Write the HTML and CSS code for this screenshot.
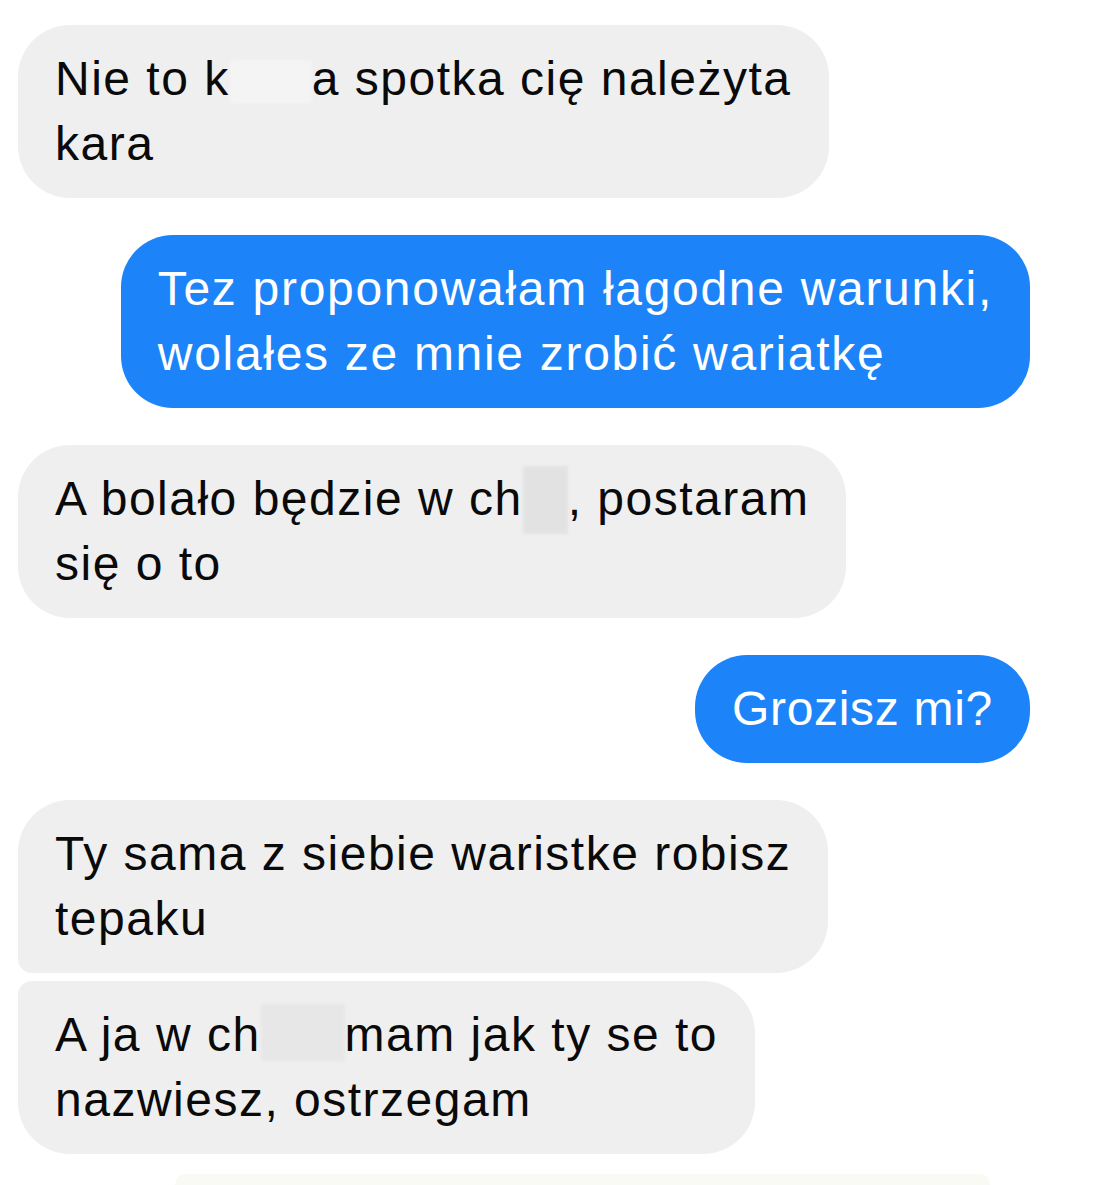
FILE: index.html
```html
<!DOCTYPE html>
<html>
<head>
    <title>Rozmowa</title>
    <link rel="stylesheet" href="styles.css">
</head>
<body>
    <div class="chat">
        <div class="msg msg-in">
            <div class="bubble">Nie to k<span class="hidden hidden-a"></span>a spotka cię należyta<br>kara</div>
        </div>

        <div class="msg msg-out">
            <div class="bubble">Tez proponowałam łagodne warunki,<br>wolałes ze mnie zrobić wariatkę</div>
        </div>

        <div class="msg msg-in">
            <div class="bubble">A bolało będzie w ch<span class="hidden hidden-b"></span>, postaram<br>się o to</div>
        </div>

        <div class="msg msg-out">
            <div class="bubble bubble-short">Grozisz mi?</div>
        </div>

        <div class="group">
            <div class="msg msg-in group-first">
                <div class="bubble">Ty sama z siebie waristke robisz<br>tepaku</div>
            </div>
            <div class="msg msg-in group-last">
                <div class="bubble">A ja w ch<span class="hidden hidden-c"></span>mam jak ty se to<br>nazwiesz, ostrzegam</div>
            </div>
        </div>

        <div class="next-preview"></div>
    </div>
</body>
</html>
```

FILE: styles.css
```css
body {
    font-family: "Liberation Sans", Arial, sans-serif;
    background-color: #fff;
    margin: 0;
    padding: 0;
}

.chat {
    display: flex;
    flex-direction: column;
    gap: 37px;
    padding: 25px 72px 0 18px;
    height: 1185px;
    box-sizing: border-box;
    overflow: hidden;
}

.msg {
    display: flex;
}

.msg-in {
    justify-content: flex-start;
}

.msg-out {
    justify-content: flex-end;
}

.bubble {
    font-size: 48px;
    line-height: 65px;
    letter-spacing: 1.5px;
    padding: 21px 37px 22px 37px;
    border-radius: 52px;
    white-space: nowrap;
}

.msg-in .bubble {
    background-color: #efefef;
    color: #0a0a0a;
}

.msg-out .bubble {
    background-color: #1c84f8;
    color: #fff;
    letter-spacing: 1.7px;
}

.msg-out .bubble-short {
    letter-spacing: 0.7px;
}

.group {
    display: flex;
    flex-direction: column;
    gap: 8px;
}

.group-first .bubble {
    border-bottom-left-radius: 14px;
}

.group-last .bubble {
    border-top-left-radius: 14px;
}

/* censored word: empty gap with a soft patch laid over it */
.hidden {
    display: inline-block;
    position: relative;
}

.hidden::before {
    content: "";
    position: absolute;
    left: 0;
    right: 0;
    filter: blur(1.5px);
}

.hidden-a {
    width: 82px;
}

.hidden-a::before {
    top: -35px;
    height: 43px;
    background-color: #f4f4f4;
}

.hidden-b {
    width: 45px;
}

.hidden-b::before {
    top: -49px;
    height: 68px;
    background-color: #e2e2e2;
}

.hidden-c {
    width: 84px;
}

.hidden-c::before {
    top: -47px;
    height: 57px;
    background-color: #e7e7e7;
}

.next-preview {
    margin: -17px 40px 0 157px;
    height: 40px;
    background-color: #fafaf5;
    border-top-left-radius: 10px;
    border-top-right-radius: 10px;
}
```
